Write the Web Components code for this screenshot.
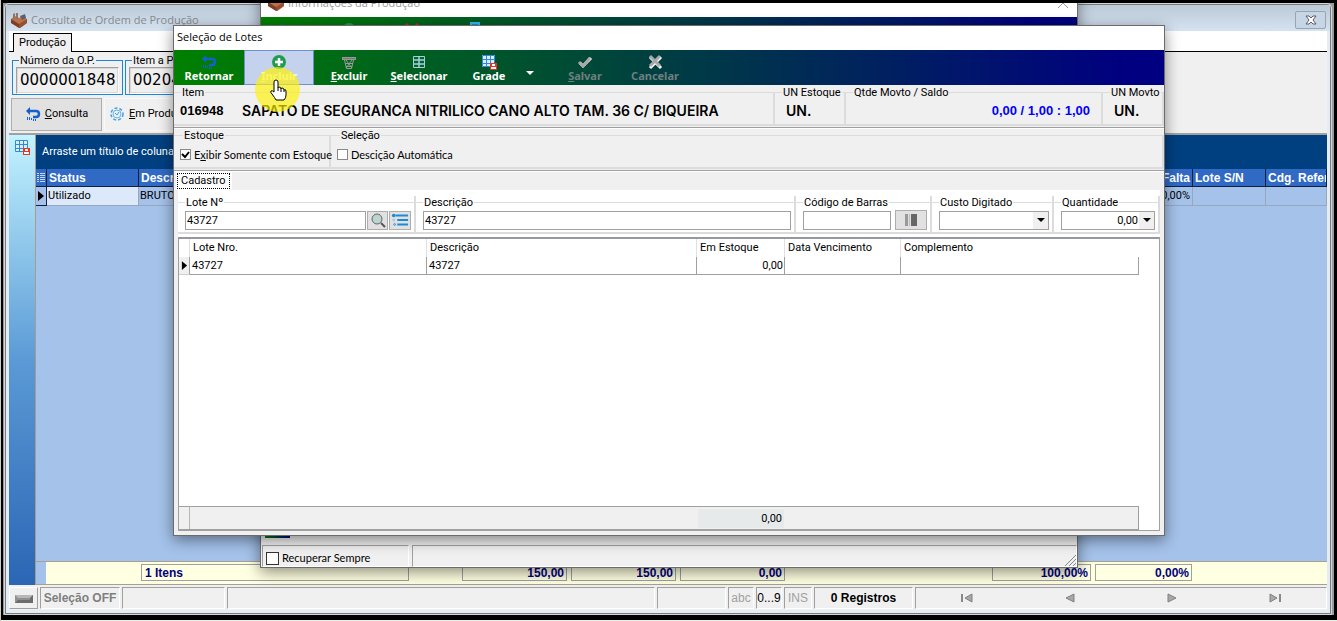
<!DOCTYPE html>
<html lang="pt-BR">
<head>
<meta charset="utf-8">
<title>Seleção de Lotes</title>
<style>
    html, body {
        height: 100%;
        margin: 0;
    }
    body {
        display: flex;
        box-sizing: border-box;
        padding: 3px 3px 6px 3px;
        background: #000;
        box-shadow: inset 1px 0 #ccc, inset 0 -1px #e4f2e4;
        color: #000;
        font: 11px/12px Roboto, "Liberation Sans", sans-serif;
        overflow: hidden;
    }
</style>
</head>
<body>
<erp-desktop></erp-desktop>

<script>
const ICONS = {
    voltar: `<svg viewBox="0 0 16 16"><path d="M3 5h8q3 0 3 3t-3 3H8" fill="none" stroke="#1560cc" stroke-width="2.500"/><path d="M5 1v8L1 5z" fill="#1560cc"/><path d="M2.500 11v3M4.500 11v3M6.500 12v2M8.500 13v2M10.500 13v2" stroke="#1560cc"/></svg>`,
    incluir: `<svg viewBox="0 0 16 16"><circle cx="8" cy="8" r="7" fill="#1f9d4d"/><path d="M8 4v8M4 8h8" stroke="#fff" stroke-width="2.500"/></svg>`,
    excluir: `<svg viewBox="0 0 16 16"><path d="M1 3h14v3H1z" fill="#777"/><g fill="none" stroke="#999"><path d="M1.500 3.500h13v2h-13zM3.500 6l2 8.500h5l2-8.500M5 6l6 8M11 6l-6 8M4 9.500h8M5 12.500h6"/></g></svg>`,
    selecionar: `<svg viewBox="0 0 16 16"><g fill="#0b5a45" stroke="#9fd8c4"><path d="M2.500 2.500h11v11h-11z"/><path d="M8 2v12M2 6h12M2 10h12" stroke-width="1.500"/></g></svg>`,
    grade: `<svg viewBox="0 0 16 16"><path d="M1 1h13v12H1z" fill="#d8ecff"/><path d="M1.500 1.500h12v11h-12zM1 5.500h13M1 9.500h13M5.500 1v12M9.500 1v12" stroke="#2f8ad6" fill="none"/><path d="M9 9h7v7H9z" fill="#e8351e"/><path d="M11 10h3v2h-3zM10 13h5v2h-5z" fill="#fff"/></svg>`,
    salvar: `<svg viewBox="0 0 16 16"><path d="M3 9l3 3 8-8" fill="none" stroke="#fff" stroke-width="3"/><path d="M2 8l4 4 7-8" fill="none" stroke="#a8a8a8" stroke-width="3"/></svg>`,
    cancelar: `<svg viewBox="0 0 16 16"><path d="M3 3l11 11M14 3L3 14" stroke="#fff" stroke-width="3"/><path d="M3 2l10 10M13 2L3 12" stroke="#a8a8a8" stroke-width="3"/></svg>`,
    vermelho: `<svg viewBox="0 0 16 16"><path d="M2 2l12 12M14 2L2 14" stroke="#d22" stroke-width="3"/></svg>`,
    documento: `<svg viewBox="0 0 16 16"><path d="M4 1h8v13H4z" fill="#3a7ad8" stroke="#29c0f0" stroke-width="2"/></svg>`,
    engrenagem: `<svg viewBox="0 0 16 16"><circle cx="8" cy="8" r="6" fill="none" stroke="#4a9ee0" stroke-width="1.500" stroke-dasharray="3 2"/><circle cx="8" cy="8" r="4" fill="#e4f2fc" stroke="#6cb3ea"/><path d="M6 7l2 2 2-3" fill="none" stroke="#4a9ee0"/></svg>`,
    fabrica: `<svg viewBox="0 0 16 16"><path d="M0 7l4-3 4 2 4-2 4 3v4l-7 5-9-5z" fill="#c07048"/><path d="M0 7l8 5v4l-8-5z" fill="#7a4026"/><path d="M8 12l8-5v4l-7 5H8z" fill="#955033"/><path d="M2 2l2-1v6H2zM5 1h2v6H5z" fill="#8d7468"/><path d="M9 4l5-2 1 4-4 2z" fill="#59636d"/></svg>`,
    lupa: `<svg viewBox="0 0 16 16"><circle cx="7" cy="7" r="5" fill="#bcd3cf" stroke="#666"/><path d="M11 11l4 4" stroke="#555" stroke-width="2"/></svg>`,
    lista: `<svg viewBox="0 0 20 16"><path d="M5 3h14M7 8h12M7 13h12" stroke="#1c8ad8" stroke-width="2"/><circle cx="3" cy="3" r="2" fill="#1c8ad8"/><circle cx="3" cy="8" r="1" fill="none" stroke="#8bbfe6"/><circle cx="4" cy="13" r="1" fill="none" stroke="#1c8ad8"/></svg>`,
    barras: `<svg viewBox="0 0 14 14"><path d="M1 1h3v12H1z" fill="#999"/><path d="M5 1h1v12H5z" fill="#bbb"/><path d="M7 1h6v12H7z" fill="#666"/></svg>`,
    seta: `<svg viewBox="0 0 8 8"><path d="M0 2h8L4 6z" fill="currentColor"/></svg>`,
    marcador: `<svg viewBox="0 0 8 10"><path d="M1 0v10l6-5z" fill="#000"/></svg>`,
    colunas: `<svg viewBox="0 0 8 12"><path d="M0 1.500h2M0 3.500h2M0 5.500h2M0 7.500h2M0 9.500h2M3 1.500h5M3 3.500h5M3 5.500h5M3 7.500h5M3 9.500h5" stroke="#c4d8fa"/></svg>`,
    teclado: `<svg viewBox="0 0 18 8"><path d="M0 0h18v8H0z" fill="#909090"/><path d="M0 0h18l-3 3H3z" fill="#b8b8b8"/><path d="M0 8h18V0l-3 3v2H3z" fill="#6c6c6c"/></svg>`,
    fechar: `<svg viewBox="0 0 12 10"><path d="M1 1h3l2 2 2-2h3L8 5l3 4H8L6 7 4 9H1l3-4z" fill="#fff" stroke="#555a68"/></svg>`,
    fecharFino: `<svg viewBox="0 0 12 12"><path d="M1 1l10 10M11 1L1 11" stroke="#999"/></svg>`,
    primeiro: `<svg viewBox="0 0 12 10"><path d="M1 1v8" stroke="#888" stroke-width="2"/><path d="M11 1v8L4 5z" fill="#a8a8a8" stroke="#808080"/></svg>`,
    anterior: `<svg viewBox="0 0 12 10"><path d="M10 1v8L2 5z" fill="#a8a8a8" stroke="#808080"/></svg>`,
    proximo: `<svg viewBox="0 0 12 10"><path d="M2 1v8l8-4z" fill="#a8a8a8" stroke="#808080"/></svg>`,
    ultimo: `<svg viewBox="0 0 12 10"><path d="M11 1v8" stroke="#888" stroke-width="2"/><path d="M1 1v8l7-4z" fill="#a8a8a8" stroke="#808080"/></svg>`,
    grip: `<svg viewBox="0 0 12 12"><path d="M1 12L12 1M5 12l7-7M9 12l3-3" stroke="#888"/></svg>`,
    mao: `<svg viewBox="0 0 18 22"><path d="M5 13V3q0-2 2-2t2 2v6q0-1 1-1 2 0 2 2 0-1 1-1 2 0 2 2 2-1 2 1v4q0 3-2 5H7q-1-2-4-6-2-2-1-3 1-1 3 1z" fill="#fff" stroke="#000"/><path d="M9 9v3M12 10v3M15 11v2" stroke="#000"/></svg>`
};

// base: monta o shadow root com o estilo e a marcação da classe
class Base extends HTMLElement {
    constructor() {
        super();
        this.attachShadow({ mode: 'open' });
    }

    attr(name) {
        return this.getAttribute(name) ?? '';
    }

    // "E&xibir" -> x sublinhado
    mnemonic(text) {
        return text.replace(/&(.)/, '<u>$1</u>');
    }

    connectedCallback() {
        this.shadowRoot.innerHTML = `<style>* { box-sizing: border-box; } ${this.styles()}</style>${this.markup()}`;
    }
}

class UiIcon extends Base {
    styles() {
        return `
            :host { display: inline-block; width: 16px; height: 16px; flex: none; }
            svg { display: block; width: 100%; height: 100%; }
        `;
    }
    markup() {
        return ICONS[this.attr('name')];
    }
}

class MdiWindow extends Base {
    styles() {
        return `
            :host {
                display: flex;
                flex-direction: column;
                flex: 1;
                box-sizing: border-box;
                min-width: 0;
                margin: 1px 3px 1px 2px;
                padding: 0 3px 3px;
                border: 1px solid #777b80;
                outline: 1px solid #d4d8dc;
                border-radius: 4px 4px 0 0;
                background: #e4edf6;
            }
            header {
                display: flex;
                align-items: center;
                gap: 4px;
                height: 26px;
                margin: 0 -3px;
                padding: 3px 4px 0 5px;
                background: linear-gradient(#bccad8, #d5e3f1);
                color: #85898e;
                font: 11px/16px "Open Sans", "Noto Sans", sans-serif;
            }
            h1 { flex: 1; margin: 0; font: inherit; }
            button {
                display: flex;
                align-items: center;
                justify-content: center;
                width: 31px;
                height: 18px;
                padding: 0;
                border: 1px solid #98a3b8;
                border-radius: 2px;
                background: #c8d5e4;
            }
            button ui-icon { width: 12px; height: 10px; }
            main { display: flex; flex-direction: column; flex: 1; min-height: 0; background: #f0f0f0; }
        `;
    }
    markup() {
        return `
            <header>
                <ui-icon name="fabrica"></ui-icon>
                <h1>${this.attr('heading')}</h1>
                <button aria-label="Fechar"><ui-icon name="fechar"></ui-icon></button>
            </header>
            <main><slot></slot></main>
        `;
    }
}

class DialogWindow extends Base {
    styles() {
        return `
            :host {
                position: absolute;
                display: flex;
                flex-direction: column;
                box-sizing: border-box;
                border: 1px solid #6b6b6b;
                background: #f0f0f0;
                box-shadow: 0 4px 14px rgba(0, 0, 0, .45);
            }
            header {
                display: flex;
                align-items: center;
                gap: 4px;
                height: 24px;
                padding: 0 3px 2px;
                background: #fff;
                font: 11px/16px "Open Sans", "Noto Sans", sans-serif;
            }
            h2 { flex: 1; margin: 0; font: inherit; }
            button { display: flex; padding: 0 8px; border: 0; background: none; }
            button ui-icon { width: 12px; height: 12px; }
            :host([inactive]) header { height: 29px; padding: 0 0 0 7px; color: #999; }
        `;
    }
    markup() {
        const inactive = this.hasAttribute('inactive');
        return `
            <header>
                ${inactive ? '<ui-icon name="fabrica"></ui-icon>' : ''}
                <h2>${this.attr('heading')}</h2>
                ${inactive ? '<button aria-label="Fechar"><ui-icon name="fecharFino"></ui-icon></button>' : ''}
            </header>
            <slot></slot>
        `;
    }
}

class ToolBar extends Base {
    styles() {
        return `
            :host {
                display: flex;
                flex: none;
                height: 35px;
                background: linear-gradient(90deg, #008000, #000080 96%);
                overflow: hidden;
            }
        `;
    }
    markup() {
        return `<slot></slot>`;
    }
}

class ToolButton extends Base {
    styles() {
        return `
            :host { display: flex; flex: none; width: 70px; }
            :host([menu]) { width: 26px; }
            button {
                display: flex;
                flex-direction: column;
                align-items: center;
                width: 100%;
                padding: 4px 0 0;
                border: 0;
                background: none;
                color: #fff;
                font: bold 11px/12px "Noto Sans", "Open Sans", sans-serif;
            }
            button:disabled { color: #6f7f7f; }
            :host([hot]) button { padding-top: 3px; border: 1px solid #6f8fd0; background: #c4d2ee; }
            :host([menu]) button { padding: 19px 14px 0 0; }
            :host([menu]) ui-icon { width: 8px; height: 8px; }
        `;
    }
    markup() {
        if (this.hasAttribute('menu')) {
            return `<button aria-label="${this.attr('menu')}"><ui-icon name="seta"></ui-icon></button>`;
        }
        return `
            <button ${this.hasAttribute('disabled') ? 'disabled' : ''}>
                <ui-icon name="${this.attr('icon')}"></ui-icon>
                <span>${this.mnemonic(this.attr('label'))}</span>
            </button>
        `;
    }
}

class GroupBox extends Base {
    styles() {
        return `
            :host { display: block; min-width: 0; }
            fieldset {
                display: flex;
                align-items: center;
                height: 100%;
                min-width: 0;
                margin: 0;
                padding: 0 3px 2px 4px;
                border: solid #dcdcdc;
                border-width: 1px 2px 2px 0;
            }
            legend { padding: 1px 1px 0; margin-left: 3px; white-space: nowrap; }
            :host([framed]) fieldset { padding: 0 3px; border: 1px solid #1a86e0; }
            :host([options]) fieldset { padding: 0 3px 0 6px; }
        `;
    }
    markup() {
        return `<fieldset><legend>${this.attr('legend')}</legend><slot></slot></fieldset>`;
    }
}

// grupo cujo título é o próprio label do campo
class FieldBox extends Base {
    styles() {
        return `
            :host { display: block; min-width: 0; }
            .box {
                display: grid;
                grid-template-rows: 13px 20px;
                row-gap: 1px;
                height: 100%;
                padding: 0 3px 0 7px;
                background: linear-gradient(#dcdcdc, #dcdcdc) 0 6px / 100% 1px no-repeat;
                border-right: 2px solid #dcdcdc;
                border-bottom: 2px solid #dcdcdc;
            }
            label { justify-self: start; padding: 1px 1px 0; background: #fff; }
            .line { display: flex; align-items: center; gap: 1px; }
            .wrap { display: flex; align-items: center; flex: 1; min-width: 0; height: 19px; border: 1px solid #a0a0a0; background: #fff; }
            input, select {
                flex: 1;
                width: 100%;
                min-width: 0;
                height: 17px;
                padding: 0 1px;
                border: 0;
                outline: 0;
                appearance: none;
                background: none;
                color: inherit;
                font: inherit;
            }
            input.right { text-align: right; }
            .drop { display: flex; align-items: center; justify-content: center; width: 15px; height: 17px; padding: 0; border: 0; background: #f0f0f0; color: #000; }
            .drop ui-icon { width: 8px; height: 8px; }
        `;
    }
    markup() {
        const type = this.attr('type');
        const control = type === 'select'
            ? `<select id="campo"><option></option></select><span class="drop"><ui-icon name="seta"></ui-icon></span>`
            : `<input id="campo" type="text" class="${type === 'spin' ? 'right' : ''}" value="${this.attr('value')}">`;
        const spin = type === 'spin' ? `<button class="drop" aria-label="Calculadora"><ui-icon name="seta"></ui-icon></button>` : '';
        return `
            <div class="box">
                <label for="campo">${this.attr('label')}</label>
                <div class="line"><div class="wrap">${control}${spin}</div><slot></slot></div>
            </div>
        `;
    }
}

class IconButton extends Base {
    styles() {
        return `
            :host { display: block; flex: none; width: 21px; height: 19px; }
            :host([wide]) { width: 32px; height: 20px; margin-left: 3px; }
            button { display: flex; align-items: center; justify-content: center; width: 100%; height: 100%; padding: 0; border: 1px solid #adadad; background: #e1e1e1; }
            :host([icon="lista"]) { width: 22px; }
            :host([icon="lista"]) ui-icon { width: 18px; }
            :host([wide]) ui-icon { width: 14px; height: 14px; }
        `;
    }
    markup() {
        return `<button aria-label="${this.attr('label')}"><ui-icon name="${this.attr('icon')}"></ui-icon></button>`;
    }
}

class CheckOption extends Base {
    styles() {
        return `
            :host { display: block; font-family: Lato, "Liberation Sans", sans-serif; }
            label { display: flex; align-items: center; gap: 3px; white-space: nowrap; }
            .mark { position: relative; display: flex; }
            .mark svg { position: absolute; inset: 0; width: 100%; height: 100%; }
            input {
                width: 11px;
                height: 11px;
                margin: 0;
                appearance: none;
                border: 1px solid #8a8a8a;
                background: #fff;
            }
            input:not(:checked) + svg { display: none; }
            :host([large]) input { width: 13px; height: 13px; border-color: #333; }
        `;
    }
    markup() {
        return `
            <label>
                <span class="mark">
                    <input type="checkbox" ${this.hasAttribute('checked') ? 'checked' : ''}>
                    <svg viewBox="0 0 11 11"><path d="M2 5l3 3 4-5" fill="none" stroke="#000" stroke-width="2"/></svg>
                </span>
                <span>${this.mnemonic(this.attr('label'))}</span>
            </label>
        `;
    }
}

class StatusCell extends Base {
    styles() {
        return `
            :host {
                display: flex;
                flex: none;
                align-items: center;
                justify-content: center;
                box-sizing: border-box;
                border: solid;
                border-width: 1px;
                border-color: #a0a0a0 #fff #fff #a0a0a0;
            }
        `;
    }
    markup() {
        return `<slot></slot>`;
    }
}

class MainGrid extends Base {
    styles() {
        return `
            :host { display: flex; flex: 1; min-height: 0; border-top: 2px solid #a0a0a0; }
            aside { width: 26px; padding: 4px 4px 0 5px; background: linear-gradient(#c2f3ff, #5b9ad6 50%, #2a66b4); }
            aside button { display: block; padding: 0; border: 0; background: none; }
            .area { display: flex; flex: 1; flex-direction: column; min-width: 0; border-left: 1px solid #a79c90; background: #a4c2ea; }
            .group { height: 34px; padding: 0 6px; background: #004080; color: #fff; line-height: 34px; white-space: nowrap; }
            table { width: 100%; table-layout: fixed; border-collapse: separate; border-spacing: 0; }
            th, td { height: 18px; padding: 0 2px; overflow: hidden; text-align: left; white-space: nowrap; border-right: 1px solid #9aa7bb; border-bottom: 1px solid #9aa7bb; }
            th { background: #316ac5; color: #fff; font: bold 12px/12px "Liberation Sans", Arial, sans-serif; border-color: #102040; }
            td { height: 19px; padding-left: 1px; }
            th:first-child, td:first-child { padding: 0 1px; border-color: #102040; }
            th ui-icon, td ui-icon { display: block; width: 8px; height: 12px; }
            td ui-icon { height: 10px; }
            td.on { background: #dce9fa; }
            .num { text-align: right; }
            .fill { flex: 1; }
            footer { display: flex; gap: 4px; height: 24px; padding: 2px 0 3px; border: solid #a8a090; border-width: 1px 0; background: #ffffe1; color: #000080; font: bold 12px/16px "Liberation Sans", Arial, sans-serif; }
            footer span { width: 105px; padding: 0 2px; border: 1px solid #a0a0a0; text-align: right; }
            footer i { width: 10px; margin: -2px 91px -3px 0; background: #a4c2ea; }
            footer .count { width: 268px; margin-right: 49px; padding: 0 3px; text-align: left; }
            footer .pct { width: 99px; margin-left: auto; }
            footer .pct.last { width: 97px; margin: 0 135px 0 0; }
        `;
    }
    markup() {
        return `
            <aside><button aria-label="Gravar grade"><ui-icon name="grade"></ui-icon></button></aside>
            <div class="area">
                <div class="group">Arraste um título de coluna</div>
                <table>
                    <colgroup><col style="width:11px"><col style="width:92px"><col><col style="width:50px"><col style="width:73px"><col style="width:61px"></colgroup>
                    <thead><tr><th><ui-icon name="colunas"></ui-icon></th><th>Status</th><th>Descr</th><th class="num">Falta</th><th>Lote S/N</th><th>Cdg. Refer</th></tr></thead>
                    <tbody><tr><td><ui-icon name="marcador"></ui-icon></td><td class="on">Utilizado</td><td>BRUTO</td><td class="num">0,00%</td><td></td><td></td></tr></tbody>
                </table>
                <div class="fill"></div>
                <footer>
                    <i></i><span class="count">1 Itens</span><span>150,00</span><span>150,00</span><span>0,00</span>
                    <span class="pct">100,00%</span><span class="pct last">0,00%</span>
                </footer>
            </div>
        `;
    }
}

class LotGrid extends Base {
    styles() {
        return `
            :host { display: flex; flex: 1; flex-direction: column; min-height: 0; padding-right: 20px; border: 1px solid #a0a0a0; border-top: 2px solid #95989e; background: #fff; }
            table { width: 100%; table-layout: fixed; border-collapse: separate; border-spacing: 0; }
            th, td { height: 18px; padding: 0 2px; text-align: left; font-weight: normal; white-space: nowrap; border-right: 1px solid #a0a0a0; }
            th { padding-left: 3px; border-color: #e0e0e0; }
            th:last-child { border: 0; }
            td { border-bottom: 1px solid #a0a0a0; }
            td:first-child { border-bottom-color: #d0d0d0; background: #f0f0f0; }
            td ui-icon { display: block; width: 7px; height: 9px; }
            .num { text-align: right; padding: 0 1px; }
            .fill { flex: 1; }
            footer { display: flex; height: 24px; border: 1px solid #a0a0a0; border-left: 0; background: #f0f0f0; }
            footer span { border-left: 1px solid #b8b8b8; margin-left: 10px; flex: 1; }
            footer output { width: 86px; margin: 2px 354px 1px 0; padding: 0 2px; background: #e6eaeb; line-height: 20px; text-align: right; }
        `;
    }
    markup() {
        return `
            <table>
                <colgroup><col style="width:11px"><col style="width:237px"><col><col style="width:88px"><col style="width:116px"><col style="width:238px"></colgroup>
                <thead><tr><th></th><th>Lote Nro.</th><th>Descrição</th><th>Em Estoque</th><th>Data Vencimento</th><th>Complemento</th></tr></thead>
                <tbody><tr><td><ui-icon name="marcador"></ui-icon></td><td>43727</td><td>43727</td><td class="num">0,00</td><td></td><td></td></tr></tbody>
            </table>
            <div class="fill"></div>
            <footer><span></span><output>0,00</output></footer>
        `;
    }
}

class ProductionPage extends Base {
    styles() {
        return `
            :host { display: flex; flex: 1; flex-direction: column; min-height: 0; }
            nav { display: flex; height: 21px; padding: 2px 0 0 4px; border-bottom: 1px solid #000; background: #fff; }
            nav button { height: 19px; margin-bottom: -1px; padding: 0 5px; border: 1px solid #000; border-bottom: 0; background: #f0f0f0; font: inherit; }
            .groups { display: flex; gap: 2px; padding: 2px 3px 3px; }
            .groups group-box { width: 111px; height: 41px; }
            .groups group-box + group-box { width: 300px; }
            .code { flex: 1; height: 27px; padding: 0 3px; border: 1px solid #a0a0a0; border-right-color: #fff; border-bottom-color: #fff; outline: 1px solid #d8d8d8; outline-offset: -2px; font: 15px/24px "DejaVu Sans", sans-serif; }
            .buttons { display: flex; gap: 2px; padding: 0 2px 2px; }
            .buttons button { display: flex; align-items: center; justify-content: center; gap: 4px; width: 91px; height: 33px; padding: 0 0 1px; border: 1px solid #adadad; background: #e1e1e1; font: inherit; white-space: nowrap; }
            .buttons button + button { justify-content: flex-start; width: 96px; padding-left: 4px; border-color: #f8f8f8; background: #f0f0f0; }
            .bar { display: flex; gap: 2px; height: 25px; padding: 2px 0 1px; }
            .bar status-cell { font: 12px/16px "Liberation Sans", Arial, sans-serif; color: #a0a0a0; }
            .bar .key { width: 29px; padding: 0; border: 1px solid #fff; border-right-color: #a0a0a0; border-bottom-color: #a0a0a0; background: #f0f0f0; }
            .bar .key ui-icon { width: 18px; height: 8px; }
            .bar .off { width: 80px; color: #7f7f7f; font-weight: bold; }
            .bar .dark { color: #000; }
            .grow { flex: 1; }
            .pager { display: grid; grid-template-columns: repeat(4, 1fr); width: 410px; }
            .pager button { display: flex; justify-content: center; padding: 0; border: 0; background: none; }
            .pager button ui-icon { width: 12px; height: 10px; }
        `;
    }
    markup() {
        return `
            <nav><button>Produção</button></nav>
            <div class="groups">
                <group-box framed legend="Número da O.P."><span class="code">0000001848</span></group-box>
                <group-box framed legend="Item a Pr"><span class="code">00204</span></group-box>
            </div>
            <div class="buttons">
                <button><ui-icon name="voltar"></ui-icon><span><u>C</u>onsulta</span></button>
                <button><ui-icon name="engrenagem"></ui-icon><span><u>E</u>m Produ</span></button>
            </div>
            <main-grid></main-grid>
            <div class="bar">
                <button class="key" aria-label="Teclado"><ui-icon name="teclado"></ui-icon></button>
                <status-cell class="off">Seleção OFF</status-cell>
                <status-cell style="width:103px"></status-cell>
                <status-cell class="grow"></status-cell>
                <status-cell style="width:69px"></status-cell>
                <status-cell style="width:26px">abc</status-cell>
                <status-cell class="dark" style="width:26px">0...9</status-cell>
                <status-cell style="width:28px">INS</status-cell>
                <status-cell class="dark" style="width:99px"><b>0 Registros</b></status-cell>
                <status-cell>
                    <div class="pager">
                        <button aria-label="Primeiro"><ui-icon name="primeiro"></ui-icon></button>
                        <button aria-label="Anterior"><ui-icon name="anterior"></ui-icon></button>
                        <button aria-label="Próximo"><ui-icon name="proximo"></ui-icon></button>
                        <button aria-label="Último"><ui-icon name="ultimo"></ui-icon></button>
                    </div>
                </status-cell>
            </div>
        `;
    }
}

class LotSelection extends Base {
    styles() {
        return `
            :host { display: flex; flex: 1; flex-direction: column; min-height: 0; }
            .row { display: flex; padding: 1px 0; border-bottom: 1px solid #a0a0a0; box-shadow: 0 1px #fff; }
            .row group-box { flex: none; height: 40px; }
            .row .item { flex: 1; }
            .code, .name { font: 600 14px/16px Inter, "Liberation Sans", sans-serif; white-space: nowrap; overflow: hidden; }
            .code { flex: none; width: 64px; padding-left: 2px; font: bold 13px/16px "Liberation Sans", Arial, sans-serif; }
            .name { width: 484px; }
            .un { padding-left: 7px; font: 600 14px/16px Inter, sans-serif; }
            .balance { flex: 1; padding-right: 8px; color: #0000ff; font: bold 13px/16px "Liberation Sans", Arial, sans-serif; text-align: right; }
            nav { display: flex; height: 19px; padding-left: 2px; }
            nav button { height: 19px; padding: 0 1px; border: solid #fff; border-width: 0 1px 0 0; background: #fff; font: inherit; }
            nav button span { display: block; padding: 1px 3px; border: 1px dotted #000; }
            .sheet { display: flex; flex: 1; flex-direction: column; min-height: 0; margin: 0 4px 4px; background: #fff; }
            .fields { display: grid; grid-template-columns: 238px 1fr 136px 122px 106px; height: 47px; padding: 6px 0 3px; }
        `;
    }
    markup() {
        return `
            <tool-bar>
                <tool-button icon="voltar" label="Retornar"></tool-button>
                <tool-button icon="incluir" label="&Incluir" hot></tool-button>
                <tool-button icon="excluir" label="&Excluir"></tool-button>
                <tool-button icon="selecionar" label="&Selecionar"></tool-button>
                <tool-button icon="grade" label="Grade"></tool-button>
                <tool-button menu="Opções da grade"></tool-button>
                <tool-button icon="salvar" label="&Salvar" disabled></tool-button>
                <tool-button icon="cancelar" label="Cancelar" disabled></tool-button>
            </tool-bar>
            <div class="row">
                <group-box class="item" legend="Item"><span class="code">016948</span><span class="name">SAPATO DE SEGURANCA NITRILICO CANO ALTO TAM. 36 C/ BIQUEIRA</span></group-box>
                <group-box legend="UN Estoque" style="width:71px"><span class="un">UN.</span></group-box>
                <group-box legend="Qtde Movto / Saldo" style="width:257px"><span class="balance">0,00 / 1,00 : 1,00</span></group-box>
                <group-box legend="UN Movto" style="width:61px"><span class="un">UN.</span></group-box>
            </div>
            <div class="row">
                <group-box options legend="Estoque" style="width:157px"><check-option checked label="E&xibir Somente com Estoque"></check-option></group-box>
                <group-box options class="item" legend="Seleção"><check-option label="Descição Automática"></check-option></group-box>
            </div>
            <nav><button><span>Cadastro</span></button></nav>
            <div class="sheet">
                <div class="fields">
                    <field-box label="Lote Nº" value="43727">
                        <icon-button icon="lupa" label="Pesquisar"></icon-button>
                        <icon-button icon="lista" label="Listar"></icon-button>
                    </field-box>
                    <field-box label="Descrição" value="43727"></field-box>
                    <field-box label="Código de Barras"><icon-button wide icon="barras" label="Ler código"></icon-button></field-box>
                    <field-box label="Custo Digitado" type="select"></field-box>
                    <field-box label="Quantidade" type="spin" value="0,00"></field-box>
                </div>
                <lot-grid></lot-grid>
            </div>
        `;
    }
}

class ErpDesktop extends Base {
    styles() {
        return `
            :host { position: relative; display: flex; flex: 1; min-width: 0; overflow: hidden; background: #9a9a9a; }
            .info { inset: -16px 256px 47px 257px; }
            .info tool-bar { padding-left: 17px; gap: 47px; align-items: flex-start; }
            .info tool-bar ui-icon { margin-top: 5px; }
            .info .fill { flex: 1; border-bottom: 1px solid #a0a0a0; }
            .info .strip { width: 25px; height: 3px; margin: 0 4px 7px; background: linear-gradient(90deg, #008000, #000080); }
            .info .bottom { display: flex; gap: 3px; height: 22px; padding-left: 1px; }
            .info .bottom status-cell:first-child { justify-content: flex-start; width: 147px; padding: 4px 0 0 3px; }
            .info .bottom status-cell:last-child { flex: 1; align-items: flex-end; justify-content: flex-end; }
            .info .bottom ui-icon { width: 12px; height: 12px; }
            .lots { inset: 22px 169px 79px 170px; }
            .pointer { position: absolute; left: 252px; top: 64px; display: flex; align-items: center; justify-content: center; width: 45px; height: 45px; border-radius: 50%; background: rgba(255, 242, 0, .65); pointer-events: none; }
            .pointer ui-icon { width: 18px; height: 22px; }
        `;
    }
    markup() {
        return `
            <mdi-window heading="Consulta de Ordem de Produção"><production-page></production-page></mdi-window>
            <dialog-window class="info" inactive heading="Informações da Produção">
                <tool-bar><ui-icon name="voltar"></ui-icon><ui-icon name="incluir"></ui-icon><ui-icon name="vermelho"></ui-icon><ui-icon name="documento"></ui-icon></tool-bar>
                <div class="fill"></div>
                <div class="strip"></div>
                <div class="bottom">
                    <status-cell><check-option large label="Recuperar Sempre"></check-option></status-cell>
                    <status-cell><ui-icon name="grip"></ui-icon></status-cell>
                </div>
            </dialog-window>
            <dialog-window class="lots" heading="Seleção de Lotes"><lot-selection></lot-selection></dialog-window>
            <div class="pointer"><ui-icon name="mao"></ui-icon></div>
        `;
    }
}

customElements.define('ui-icon', UiIcon);
customElements.define('mdi-window', MdiWindow);
customElements.define('dialog-window', DialogWindow);
customElements.define('tool-bar', ToolBar);
customElements.define('tool-button', ToolButton);
customElements.define('group-box', GroupBox);
customElements.define('field-box', FieldBox);
customElements.define('icon-button', IconButton);
customElements.define('check-option', CheckOption);
customElements.define('status-cell', StatusCell);
customElements.define('main-grid', MainGrid);
customElements.define('lot-grid', LotGrid);
customElements.define('production-page', ProductionPage);
customElements.define('lot-selection', LotSelection);
customElements.define('erp-desktop', ErpDesktop);
</script>
</body>
</html>
